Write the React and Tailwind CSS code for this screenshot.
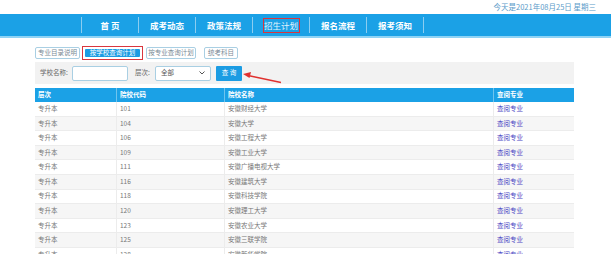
// App.jsx
const font = { fontFamily: '"Noto Sans CJK SC", "Noto Sans", sans-serif' };

const navItems = ['首 页', '成考动态', '政策法规', '招生计划', '报名流程', '报考须知'];

const schools = [
  ['101', '安徽财经大学'],
  ['104', '安徽大学'],
  ['106', '安徽工程大学'],
  ['109', '安徽工业大学'],
  ['111', '安徽广播电视大学'],
  ['116', '安徽建筑大学'],
  ['118', '安徽科技学院'],
  ['120', '安徽理工大学'],
  ['123', '安徽农业大学'],
  ['125', '安徽三联学院'],
  ['128', '安徽新华学院'],
];

const NavBar = () => (
  <div className="h-[24px] bg-[#1ba1e6] border-b-2 border-[#8fd3f5]">
    <div className="flex h-full pl-[81px]">
      {navItems.map((item, i) => (
        <div
          key={item}
          className="w-[57px] flex items-center justify-center border-l border-[#8ccdf0] my-[3px]"
        >
          {i === 3 ? (
            <span className="border border-[#d9363e] w-[37px] h-[15px] flex items-center justify-center text-[8.5px] text-[#e3f4fd]">
              {item}
            </span>
          ) : (
            <span className="text-[8.5px] font-bold text-white">{item}</span>
          )}
        </div>
      ))}
      <div className="border-l border-[#8ccdf0] my-[3px]" />
    </div>
  </div>
);

const TabButtons = () => (
  <div className="flex items-center h-[12px] mt-[9px] text-[6.5px]">
    <div className="w-[45px] h-[12px] border border-[#a9cfe3] rounded-[2px] flex items-center justify-center text-[#7a8a96]">
      专业目录说明
    </div>
    <div className="ml-[2px] w-[61px] h-[14px] border border-[#d9363e] p-[2px] flex">
      <div className="flex-1 bg-[#1b9ce3] text-white flex items-center justify-center rounded-[1px]">
        按学校查询计划
      </div>
    </div>
    <div className="ml-[3px] w-[50px] h-[12px] border border-[#a9cfe3] rounded-[2px] flex items-center justify-center text-[#7a8a96]">
      按专业查询计划
    </div>
    <div className="ml-[8px] w-[34px] h-[12px] border border-[#a9cfe3] rounded-[2px] flex items-center justify-center text-[#7a8a96]">
      统考科目
    </div>
  </div>
);

const FilterBar = () => (
  <div className="relative mt-[3px] h-[22px] bg-[#f2f2f2] flex items-center pl-[5px] text-[6.5px] text-[#666]">
    <span className="w-[32px]">学校名称:</span>
    <div className="w-[56px] h-[15px] bg-white border border-[#a9cfe3] rounded-[2px]" />
    <span className="ml-[7px] w-[20px]">层次:</span>
    <div className="w-[56px] h-[15px] bg-white border border-[#a9cfe3] rounded-[2px] flex items-center justify-between px-[5px]">
      <span className="text-[#555]">全部</span>
      <svg width="6" height="4" viewBox="0 0 6 4">
        <path d="M0.5 0.5 L3 3 L5.5 0.5" stroke="#555" strokeWidth="1" fill="none" />
      </svg>
    </div>
    <div className="ml-[5px] w-[26px] h-[15px] bg-[#1b9ce3] rounded-[1px] text-white flex items-center justify-center">
      查 询
    </div>
    <svg className="absolute left-[206px] top-[6px]" width="44" height="18" viewBox="0 0 44 18">
      <line x1="7" y1="7.5" x2="40" y2="14.5" stroke="#e0312f" strokeWidth="1.3" />
      <path d="M2 6 L10 4 L8.5 10 Z" fill="#e0312f" />
    </svg>
  </div>
);

const Table = () => (
  <div className="mt-[4px] text-[6.5px]">
    <div className="flex h-[14px] bg-[#1ba1e6] text-white font-bold items-center">
      <div className="w-[81px] pl-[3px]">层次</div>
      <div className="w-[108px] pl-[3px] h-full flex items-center border-l border-[#6fc4ee]">院校代码</div>
      <div className="w-[269px] pl-[3px] h-full flex items-center border-l border-[#6fc4ee]">院校名称</div>
      <div className="flex-1 pl-[3px] h-full flex items-center border-l border-[#6fc4ee]">查阅专业</div>
    </div>
    {schools.map(([code, name], i) => (
      <div
        key={code}
        className={`flex h-[14.6px] items-center text-[#777] border-b border-[#ececec] ${
          i % 2 === 0 ? 'bg-white' : 'bg-[#f6f6f6]'
        }`}
      >
        <div className="w-[81px] pl-[3px]">专升本</div>
        <div className="w-[108px] pl-[3px] h-full flex items-center border-l border-[#ececec]">{code}</div>
        <div className="w-[269px] pl-[3px] h-full flex items-center border-l border-[#ececec]">{name}</div>
        <div className="flex-1 pl-[3px] h-full flex items-center border-l border-[#ececec] text-[#4b48c4]">
          查阅专业
        </div>
      </div>
    ))}
  </div>
);

const App = () => {
  return (
    <div className="w-[611px] h-[254px] overflow-hidden bg-white" style={font}>
      <div className="h-[14px] flex items-center justify-end pr-[15px] text-[7.5px] text-[#5b9bc9]">
        今天是2021年08月25日 星期三
      </div>
      <NavBar />
      <div className="ml-[35px] w-[539px]">
        <TabButtons />
        <FilterBar />
        <Table />
      </div>
    </div>
  );
};

export default App;
